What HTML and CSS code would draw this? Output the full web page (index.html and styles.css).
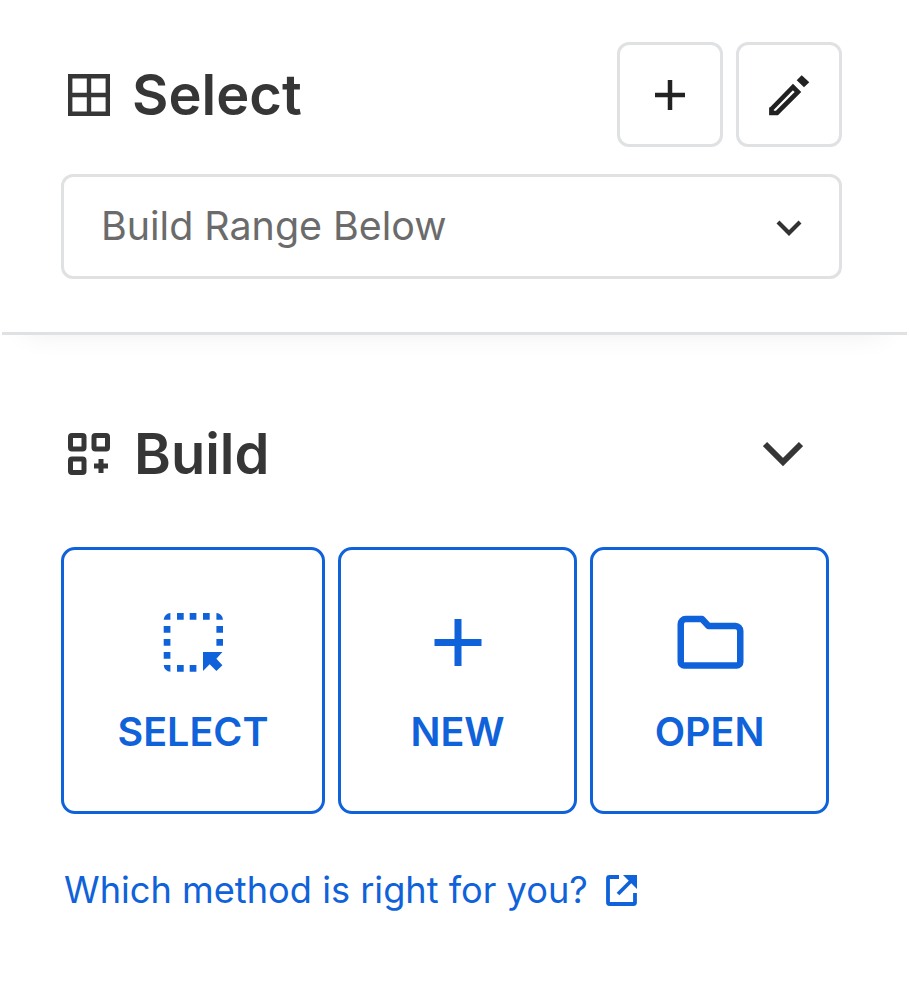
FILE: index.html
```html
<!DOCTYPE html>
<html lang="en">
<head>
<meta charset="utf-8">
<title>Select and Build</title>
<link rel="stylesheet" href="styles.css">
</head>
<body>
<section class="select-panel">
  <div class="head-row">
    <h2 class="title">
      <svg class="title-icon" viewBox="0 0 42 42"><path d="M2.200 2.200h37.600v37.600H2.200zM21 2.200v37.600M2.200 21h37.600" fill="none" stroke="#363636" stroke-width="4.400"/></svg>
      <span>Select</span>
    </h2>
    <div class="actions">
      <button class="icon-btn" type="button" aria-label="Add">
        <svg class="btn-icon" viewBox="0 0 32 32"><path d="M16 1v30M1 16h30" fill="none" stroke="#222" stroke-width="4.500"/></svg>
      </button>
      <button class="icon-btn" type="button" aria-label="Edit">
        <svg class="pencil" viewBox="0 0 42 42"><path d="M3.500 35 25 13l5 5L9 39H3.500z" fill="none" stroke="#222" stroke-width="4.600"/><path d="M1.500 33 9.500 41H1.500z" fill="#222"/><path d="M33.700 1.300 41.300 8.300 36 13.300 28.700 6.300z" fill="#222"/></svg>
      </button>
    </div>
  </div>
  <div class="dropdown">
    <span class="dropdown-text">Build Range Below</span>
    <svg class="dropdown-chevron" viewBox="0 0 26 16"><path d="M2 2l11 11L24 2" fill="none" stroke="#333" stroke-width="4.200"/></svg>
  </div>
</section>
<section class="build-panel">
  <div class="build-head">
    <h2 class="title">
      <svg class="title-icon" viewBox="0 0 42 42"><g fill="none" stroke="#363636" stroke-width="5"><rect x="2.500" y="2.500" width="13.500" height="13.500" rx="1.500"/><rect x="26" y="2.500" width="13.500" height="13.500" rx="1.500"/><rect x="2.500" y="26" width="13.500" height="13.500" rx="1.500"/><path d="M33 26v14M26 33h14"/></g></svg>
      <span>Build</span>
    </h2>
    <svg class="build-chevron" viewBox="0 0 40 26"><path d="M2 3l18 18L38 3" fill="none" stroke="#363636" stroke-width="6"/></svg>
  </div>
  <div class="cards">
    <button class="card card-wide" type="button">
      <svg class="card-icon" viewBox="-0.7 0 60 60">
        <path fill="#0f62d9" d="M0 7.500A7 7 0 0 1 6.700 1v6.700H0zM13.300 1H20v6.700h-6.700zM26 1h6.700v6.700H26zM39.300 1H46v6.700h-6.700zM52.700 1a7 7 0 0 1 6.600 6.700h-6.600zM0 14h6.700v6.700H0zM52.700 14h6.600v6.700h-6.600zM0 27h6.700v6.700H0zM52.700 27h6.600v6.700h-6.600zM0 40h6.700v6.700H0zM0 53h6.700v6.700A7 7 0 0 1 0 53zM13.300 53H20v6.700h-6.700zM26 53h6.700v6.700H26zM39.300 40h19.400l-6 6.700 6 6.600-6 5.700-6.700-6.700-6.700 6.700z"/>
      </svg>
      <span>SELECT</span>
    </button>
    <button class="card" type="button">
      <svg class="card-icon" viewBox="0 0 60 60"><path d="M30 7v47M6.500 30.500h47" fill="none" stroke="#0f62d9" stroke-width="7"/></svg>
      <span>NEW</span>
    </button>
    <button class="card" type="button">
      <svg class="card-icon card-icon-wide" viewBox="0 0 68 60"><path d="M4.750 12a5 5 0 0 1 5-5H26l6.500 7h27a5 5 0 0 1 4.750 5v31a3.500 3.500 0 0 1-3.500 3.500H8.250a3.500 3.500 0 0 1-3.500-3.500z" fill="none" stroke="#0f62d9" stroke-width="6.500" stroke-linejoin="round"/></svg>
      <span>OPEN</span>
    </button>
  </div>
  <a class="help-link" href="#">
    <span>Which method is right for you?</span>
    <svg class="link-icon" viewBox="0 0 31 31"><path d="M13 2H3.500A1.500 1.500 0 0 0 2 3.500v24A1.500 1.500 0 0 0 3.500 29h24a1.500 1.500 0 0 0 1.500-1.500V18" fill="none" stroke="#0f62d9" stroke-width="3.800"/><path d="M12 19 27 4" fill="none" stroke="#0f62d9" stroke-width="3.800"/><path d="M17 0h14v14z" fill="#0f62d9"/></svg>
  </a>
</section>
</body>
</html>
```
FILE: styles.css
```css
* { box-sizing: border-box; }
html, body { margin: 0; background: #fff; }
body { width: 909px; height: 993px; overflow: hidden; font-family: Inter, "Liberation Sans", sans-serif; }

.select-panel {
  margin: 0 2px;
  padding: 42px 65px 53px 59px;
  border-bottom: 3px solid #e0e1e3;
  box-shadow: 0 22px 26px -24px rgba(0, 0, 0, .08);
}
.head-row { display: flex; justify-content: space-between; align-items: center; margin-bottom: 28px; }
.title { display: flex; align-items: center; margin: 0; font-size: 56px; font-weight: 600; line-height: 1; color: #363636; }
.title-icon { width: 42px; height: 42px; margin-left: 7px; flex: none; }
.head-row .title-icon { margin-right: 22px; }
.actions { display: flex; gap: 13px; }
.icon-btn {
  display: flex; align-items: center; justify-content: center;
  width: 106px; height: 105px; padding: 0;
  border: 3px solid #e0e1e3; border-radius: 12px; background: #fff;
}
.btn-icon { width: 32px; height: 32px; }
.pencil { width: 42px; height: 42px; }
.dropdown {
  display: flex; align-items: center; justify-content: space-between;
  height: 105px; margin-top: -1px; padding: 0 37px 0 37px;
  border: 3px solid #e0e1e3; border-radius: 12px;
}
.dropdown-text { margin-top: -2px; font-size: 39.4px; color: #6b6b6b; }
.dropdown-chevron { width: 26px; height: 16px; margin-top: 2px; }

.build-panel { padding: 91px 80px 0 61px; }
.build-head { display: flex; justify-content: space-between; align-items: center; margin-right: 4px; padding-right: 22px; }
.build-head .title-icon { margin-right: 24px; }
.build-chevron { width: 40px; height: 26px; }
.cards { display: flex; gap: 13px; margin-top: 65px; }
.card {
  display: flex; flex-direction: column; align-items: center;
  width: 239px; height: 267px; padding: 62px 0 0;
  border: 3px solid #0f62d9; border-radius: 14px; background: #fff;
  font: 600 39.5px/1 Inter, "Liberation Sans", sans-serif; color: #0f62d9;
}
.card-wide { width: 264px; }
.card-icon { width: 60px; height: 60px; margin-bottom: 41px; flex: none; }
.card-icon-wide { width: 68px; }
.help-link { display: inline-flex; align-items: center; gap: 18px; margin: 54px 0 0 3px; font-size: 36.2px; color: #0f62d9; text-decoration: none; }
.link-icon { width: 31px; height: 31px; }
```
